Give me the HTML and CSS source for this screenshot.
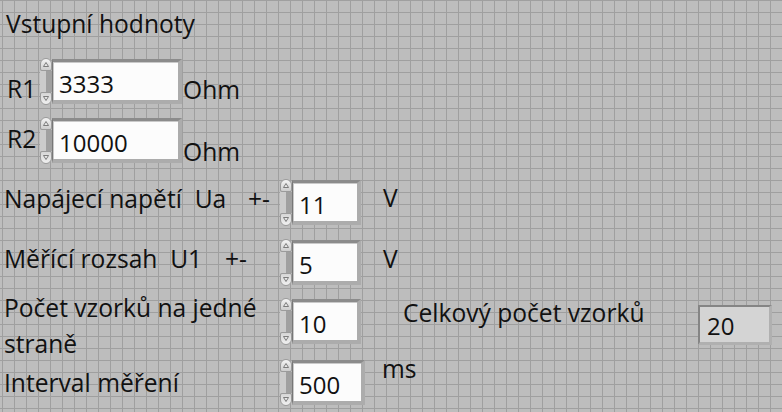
FILE: index.html
```html
<!DOCTYPE html>
<html lang="cs">
<head>
<meta charset="utf-8">
<title>Vstupní hodnoty</title>
<link rel="stylesheet" href="styles.css">
</head>
<body>
<div class="panel">
  <div class="title">Vstupní hodnoty</div>

  <div class="row row-r1">
    <span class="lbl lbl-r lbl-r1">R1</span>
    <div class="num">
      <span class="spin">
        <span class="btn up"><svg viewBox="0 0 12 13" width="12" height="13"><polygon points="3.5,8.5 6,4.5 8.5,8.5" /></svg></span>
        <span class="mid"></span>
        <span class="btn down"><svg viewBox="0 0 12 13" width="12" height="13"><polygon points="3.5,4.5 6,8.5 8.5,4.5" /></svg></span>
      </span>
      <span class="box w-r">3333</span>
    </div>
    <span class="unit ohm1">Ohm</span>
  </div>

  <div class="row row-r2">
    <span class="lbl lbl-r lbl-r2">R2</span>
    <div class="num">
      <span class="spin">
        <span class="btn up"><svg viewBox="0 0 12 13" width="12" height="13"><polygon points="3.5,8.5 6,4.5 8.5,8.5" /></svg></span>
        <span class="mid"></span>
        <span class="btn down"><svg viewBox="0 0 12 13" width="12" height="13"><polygon points="3.5,4.5 6,8.5 8.5,4.5" /></svg></span>
      </span>
      <span class="box w-r">10000</span>
    </div>
    <span class="unit ohm2">Ohm</span>
  </div>

  <div class="row row-ua">
    <span class="lbl lbl-ua">Napájecí napětí  Ua</span>
    <span class="pm pm-ua">+-</span>
    <div class="num">
      <span class="spin">
        <span class="btn up"><svg viewBox="0 0 12 13" width="12" height="13"><polygon points="3.5,8.5 6,4.5 8.5,8.5" /></svg></span>
        <span class="mid"></span>
        <span class="btn down"><svg viewBox="0 0 12 13" width="12" height="13"><polygon points="3.5,4.5 6,8.5 8.5,4.5" /></svg></span>
      </span>
      <span class="box w-s">11</span>
    </div>
    <span class="unit volt volt-ua">V</span>
  </div>

  <div class="row row-u1">
    <span class="lbl lbl-u1">Měřící rozsah  U1</span>
    <span class="pm pm-u1">+-</span>
    <div class="num">
      <span class="spin">
        <span class="btn up"><svg viewBox="0 0 12 13" width="12" height="13"><polygon points="3.5,8.5 6,4.5 8.5,8.5" /></svg></span>
        <span class="mid"></span>
        <span class="btn down"><svg viewBox="0 0 12 13" width="12" height="13"><polygon points="3.5,4.5 6,8.5 8.5,4.5" /></svg></span>
      </span>
      <span class="box w-s">5</span>
    </div>
    <span class="unit volt volt-u1">V</span>
  </div>

  <div class="row row-cnt">
    <span class="lbl lbl-cnt">Počet vzorků na jedné straně</span>
    <div class="num num-cnt">
      <span class="spin">
        <span class="btn up"><svg viewBox="0 0 12 13" width="12" height="13"><polygon points="3.5,8.5 6,4.5 8.5,8.5" /></svg></span>
        <span class="mid"></span>
        <span class="btn down"><svg viewBox="0 0 12 13" width="12" height="13"><polygon points="3.5,4.5 6,8.5 8.5,4.5" /></svg></span>
      </span>
      <span class="box w-s">10</span>
    </div>
    <span class="lbl lbl-total">Celkový počet vzorků</span>
    <span class="indicator">20</span>
  </div>

  <div class="row row-int">
    <span class="lbl lbl-int">Interval měření</span>
    <div class="num num-int">
      <span class="spin">
        <span class="btn up"><svg viewBox="0 0 12 13" width="12" height="13"><polygon points="3.5,8.5 6,4.5 8.5,8.5" /></svg></span>
        <span class="mid"></span>
        <span class="btn down"><svg viewBox="0 0 12 13" width="12" height="13"><polygon points="3.5,4.5 6,8.5 8.5,4.5" /></svg></span>
      </span>
      <span class="box w-m">500</span>
    </div>
    <span class="unit ms">ms</span>
  </div>
</div>
</body>
</html>
```

FILE: styles.css
```css
html, body {
  margin: 0;
  padding: 0;
}

body {
  width: 782px;
  height: 412px;
  overflow: hidden;
  background-color: #bdbdbd;
  background-image:
    linear-gradient(to right, #9f9f9f 0, #9f9f9f 1px, transparent 1px),
    linear-gradient(to bottom, #9f9f9f 0, #9f9f9f 1px, transparent 1px);
  background-size: 12px 12px;
  background-position: 2px 0;
  font-family: "Open Sans", "Noto Sans", "DejaVu Sans", sans-serif;
  font-size: 24.6px;
  color: #111;
}

.panel {
  padding: 8px 10px 0 0;
}

.title {
  margin-left: 6px;
  line-height: 32px;
}

.row {
  display: flex;
  align-items: flex-start;
}

.lbl, .unit, .pm {
  line-height: 32px;
  white-space: pre;
}

/* Rows */
.row-r1 { margin-top: 18px; height: 59px; }
.row-r2 { height: 62px; }
.row-ua { height: 60px; }
.row-u1 { height: 51px; }
.row-cnt { height: 60px; }
.row-int { height: 52px; }

.lbl-r { margin-left: 7px; width: 33px; }
.lbl-r1 { margin-top: 15px; }
.lbl-r2 { margin-top: 6px; }

.ohm1 { margin-left: 1px; margin-top: 16px; }
.ohm2 { margin-left: 1px; margin-top: 19px; }

.lbl-ua { margin-left: 4px; width: 244px; margin-top: 4px; }
.pm-ua { width: 32px; margin-top: 4px; }
.lbl-u1 { margin-left: 4px; width: 221px; margin-top: 4px; }
.pm-u1 { width: 55px; margin-top: 4px; }

.volt { margin-left: 22px; }
.volt-ua { margin-top: 3px; }
.volt-u1 { margin-top: 4px; }

.lbl-cnt {
  margin-left: 4px;
  width: 276px;
  white-space: normal;
  line-height: 36px;
}
.num-cnt { margin-top: 8px; }
.lbl-total { margin-left: 42px; margin-top: 7px; }

.lbl-int { margin-left: 4px; width: 276px; margin-top: 17px; }
.num-int { margin-top: 9px; }
.ms { margin-left: 17px; margin-top: 3px; }

/* Numeric control */
.num {
  display: flex;
  align-items: flex-start;
}

.spin {
  width: 12px;
  height: 47px;
  display: flex;
  flex-direction: column;
}

.btn {
  display: block;
  height: 13px;
  box-sizing: border-box;
  border: 1px solid #9b9b9b;
  background: linear-gradient(#f4f4f4, #cdcdcd);
}

.btn svg {
  display: block;
  margin: -1px 0 0 -1px;
}

.btn polygon {
  fill: #e9e9e9;
  stroke: #707070;
  stroke-width: 0.9;
  stroke-linejoin: round;
}

.up {
  border-radius: 6px 6px 2px 2px;
}

.down {
  border-radius: 2px 2px 6px 6px;
  background: linear-gradient(#d6d6d6, #f0f0f0);
}

.mid {
  flex: 1;
  background: linear-gradient(to right, #cbcbcb 0, #cbcbcb 6px, #a0a0a0 6px, #a0a0a0 12px);
}

.box {
  display: block;
  margin-top: 1px;
  border-style: solid;
  border-width: 3px 4px 4px 1px;
  border-color: #8b8b8b #acacac #acacac #777;
  background: #fcfcfc;
  height: 33px;
  padding: 5px 0 0 6px;
  line-height: 33px;
  font-size: 24px;
  box-shadow: inset 1px 1px 0 #c9c9c9;
}

.w-r { width: 119px; }
.w-s { width: 58px; }
.w-m { width: 62px; }

/* Indicator */
.indicator {
  display: block;
  margin-left: auto;
  margin-top: 15px;
  width: 62px;
  height: 32px;
  padding: 3px 0 0 7px;
  line-height: 32px;
  font-size: 24px;
  border-style: solid;
  border-width: 2px 3px 3px 2px;
  border-color: #858585 #b0b0b0 #b0b0b0 #858585;
  background: #d4d4d4;
}
```
